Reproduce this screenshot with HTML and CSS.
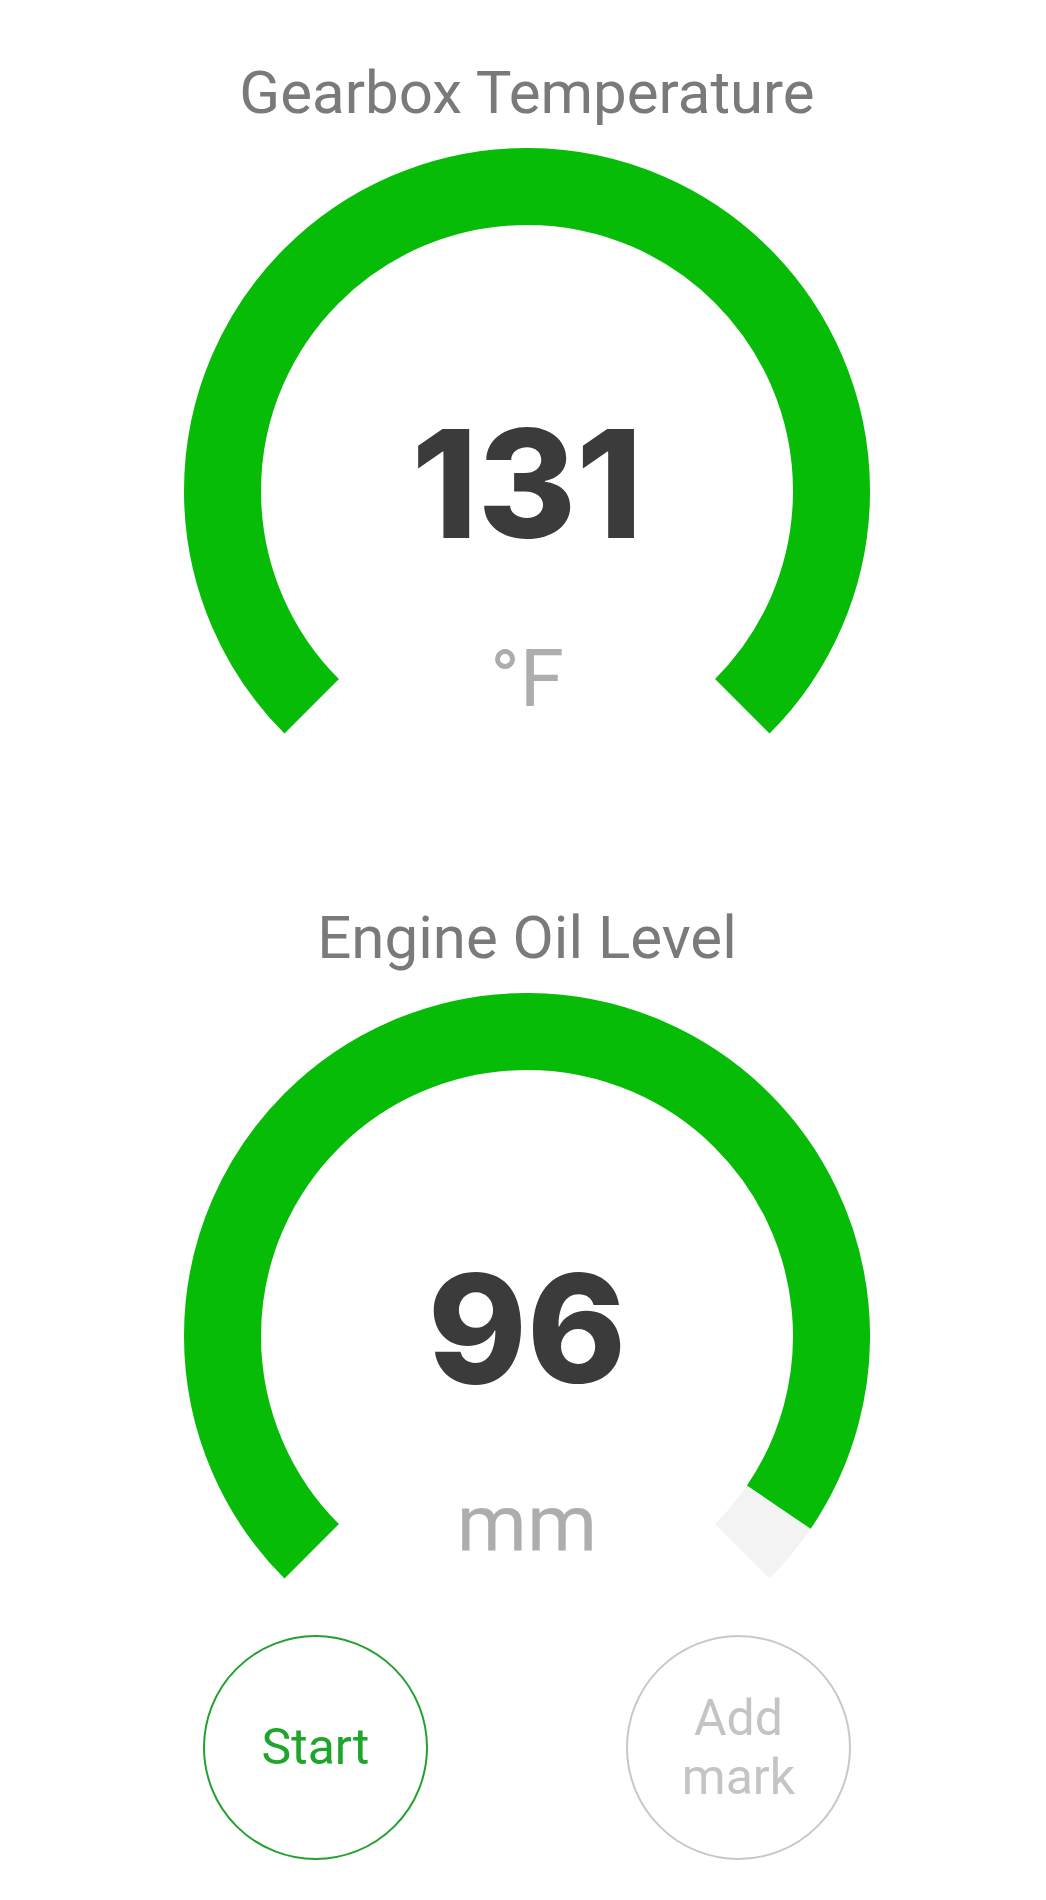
FILE: index.html
```html
<!DOCTYPE html>
<html lang="en">
<head>
  <meta charset="UTF-8">
  <meta name="viewport" content="width=device-width, initial-scale=1">
  <title>Gauges</title>
  <link rel="stylesheet" href="styles.css">
</head>
<body>
  <div class="dash">
    <section class="gauge-card">
      <h2 class="gauge-title">Gearbox Temperature</h2>
      <div class="gauge">
        <svg class="gauge-arc" viewBox="0 0 686 586">
          <path class="track" d="M 127.69 558.31 A 304.5 304.5 0 1 1 558.31 558.31" />
          <path class="fill" d="M 127.69 558.31 A 304.5 304.5 0 1 1 558.31 558.31" pathLength="100" stroke-dasharray="100 100" />
        </svg>
        <div class="readout">
          <span class="value">131</span>
          <span class="unit">°F</span>
        </div>
      </div>
    </section>

    <section class="gauge-card">
      <h2 class="gauge-title">Engine Oil Level</h2>
      <div class="gauge">
        <svg class="gauge-arc" viewBox="0 0 686 586">
          <path class="track" d="M 127.69 558.31 A 304.5 304.5 0 1 1 558.31 558.31" />
          <path class="fill" d="M 127.69 558.31 A 304.5 304.5 0 1 1 558.31 558.31" pathLength="100" stroke-dasharray="96 100" />
        </svg>
        <div class="readout">
          <span class="value">96</span>
          <span class="unit">mm</span>
        </div>
      </div>
    </section>

    <div class="actions">
      <button type="button" class="round-btn start">Start</button>
      <button type="button" class="round-btn mark">Add<br>mark</button>
    </div>
  </div>
</body>
</html>
```

FILE: styles.css
```css
* {
  margin: 0;
  padding: 0;
  box-sizing: border-box;
}

body {
  font-family: Roboto, 'Liberation Sans', sans-serif;
  background-color: #FFFFFF;
  color: #3A3A3A;
}

.dash {
  width: 1046px;
  padding: 58px 0 0 8px;
  display: flex;
  flex-direction: column;
  align-items: center;
}

.gauge-card {
  display: flex;
  flex-direction: column;
  align-items: center;
}

.gauge-card + .gauge-card {
  margin-top: 169px;
}

.gauge-title {
  font-size: 60px;
  line-height: 70px;
  font-weight: 400;
  color: #7A7A7A;
  margin-bottom: 20px;
}

.gauge {
  display: grid;
  width: 686px;
  height: 586px;
}

.gauge > * {
  grid-area: 1 / 1;
}

.gauge-arc {
  display: block;
  width: 686px;
  height: 586px;
}

.gauge-arc path {
  fill: none;
  stroke-width: 77;
}

.track {
  stroke: #F3F3F3;
}

.fill {
  stroke: #06BC06;
}

.readout {
  display: flex;
  flex-direction: column;
  align-items: center;
  padding-top: 261px;
}

.value {
  font-family: Inter, Roboto, sans-serif;
  font-weight: 800;
  font-size: 150px;
  line-height: 150px;
  color: #3B3B3B;
}

.unit {
  font-size: 80px;
  line-height: 80px;
  margin-top: 80px;
  color: #ADADAD;
}

.actions {
  display: flex;
  gap: 198px;
  margin-top: 56px;
}

.round-btn {
  width: 225px;
  height: 225px;
  border-radius: 50%;
  background: none;
  border: 2px solid #C8C8C8;
  font-family: Roboto, sans-serif;
  font-size: 50px;
  line-height: 59px;
  color: #C4C4C4;
  cursor: pointer;
}

.round-btn.start {
  border-color: #24A02F;
  color: #1EA52A;
}
```
